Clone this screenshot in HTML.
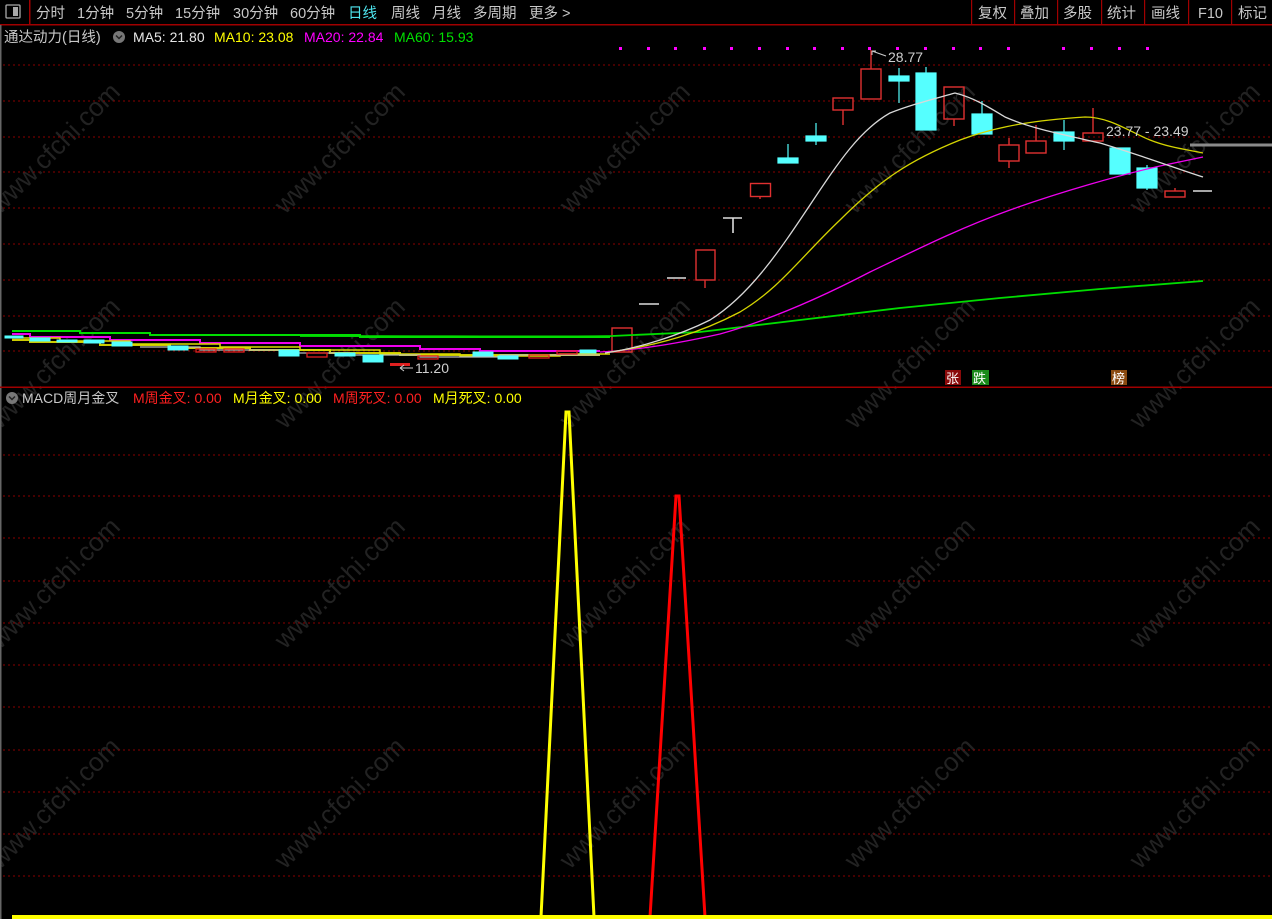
<!DOCTYPE html>
<html><head><meta charset="utf-8"><style>
html,body{margin:0;padding:0;background:#000;width:1272px;height:919px;overflow:hidden}
body{font-family:"Liberation Sans","Noto Sans CJK SC",sans-serif}
svg{position:absolute;left:0;top:0}
</style></head><body>
<svg width="1272" height="919" viewBox="0 0 1272 919" xmlns="http://www.w3.org/2000/svg" font-family="Liberation Sans, Noto Sans CJK SC, sans-serif">
<g fill="#222" font-size="26" font-family="Liberation Sans, sans-serif">
<text transform="translate(0,215) rotate(-45)">www.cfchi.com</text>
<text transform="translate(285,215) rotate(-45)">www.cfchi.com</text>
<text transform="translate(570,215) rotate(-45)">www.cfchi.com</text>
<text transform="translate(855,215) rotate(-45)">www.cfchi.com</text>
<text transform="translate(1140,215) rotate(-45)">www.cfchi.com</text>
<text transform="translate(0,430) rotate(-45)">www.cfchi.com</text>
<text transform="translate(285,430) rotate(-45)">www.cfchi.com</text>
<text transform="translate(570,430) rotate(-45)">www.cfchi.com</text>
<text transform="translate(855,430) rotate(-45)">www.cfchi.com</text>
<text transform="translate(1140,430) rotate(-45)">www.cfchi.com</text>
<text transform="translate(0,650) rotate(-45)">www.cfchi.com</text>
<text transform="translate(285,650) rotate(-45)">www.cfchi.com</text>
<text transform="translate(570,650) rotate(-45)">www.cfchi.com</text>
<text transform="translate(855,650) rotate(-45)">www.cfchi.com</text>
<text transform="translate(1140,650) rotate(-45)">www.cfchi.com</text>
<text transform="translate(0,870) rotate(-45)">www.cfchi.com</text>
<text transform="translate(285,870) rotate(-45)">www.cfchi.com</text>
<text transform="translate(570,870) rotate(-45)">www.cfchi.com</text>
<text transform="translate(855,870) rotate(-45)">www.cfchi.com</text>
<text transform="translate(1140,870) rotate(-45)">www.cfchi.com</text>
</g>
<rect x="0" y="24" width="1272" height="1.5" fill="#a00000"/>
<rect x="29" y="0" width="1.5" height="24" fill="#a00000"/>
<rect x="6" y="5" width="14" height="13" fill="none" stroke="#aaa" stroke-width="1.3" rx="1"/>
<rect x="13" y="7" width="5" height="9" fill="#aaa"/>
<g fill="#c8c8c8" font-size="14.5">
<text x="36" y="18">分时</text><text x="77" y="18">1分钟</text><text x="126" y="18">5分钟</text>
<text x="175" y="18">15分钟</text><text x="233" y="18">30分钟</text><text x="290" y="18">60分钟</text>
<text x="348" y="18" fill="#4fe6f0">日线</text><text x="391" y="18">周线</text><text x="432" y="18">月线</text>
<text x="473" y="18">多周期</text><text x="529" y="18">更多</text>
<text x="562" y="18">&gt;</text>
<text x="978" y="18">复权</text><text x="1020" y="18">叠加</text><text x="1063" y="18">多股</text>
<text x="1107" y="18">统计</text><text x="1151" y="18">画线</text><text x="1198" y="18">F10</text><text x="1238" y="18">标记</text>
</g>
<g fill="#a00000">
<rect x="971" y="0" width="1.2" height="24"/><rect x="1014" y="0" width="1.2" height="24"/><rect x="1057" y="0" width="1.2" height="24"/>
<rect x="1101" y="0" width="1.2" height="24"/><rect x="1144" y="0" width="1.2" height="24"/><rect x="1188" y="0" width="1.2" height="24"/><rect x="1231" y="0" width="1.2" height="24"/>
</g>
<text x="4" y="42" fill="#c8c8c8" font-size="14.5">通达动力(日线)</text>
<circle cx="119" cy="37" r="6" fill="#777"/><path d="M116 35.5 L119 38.5 L122 35.5" stroke="#222" stroke-width="1.5" fill="none"/>
<g font-size="14"><text x="133" y="42" fill="#e6e6e6">MA5: 21.80</text><text x="214" y="42" fill="#ffff00">MA10: 23.08</text>
<text x="304" y="42" fill="#ff00ff">MA20: 22.84</text><text x="394" y="42" fill="#00e000">MA60: 15.93</text></g>
<g stroke="#8a0000" stroke-width="1" stroke-dasharray="2 3">
<line x1="3" y1="65" x2="1272" y2="65"/><line x1="3" y1="101" x2="1272" y2="101"/><line x1="3" y1="137" x2="1272" y2="137"/>
<line x1="3" y1="172" x2="1272" y2="172"/><line x1="3" y1="208" x2="1272" y2="208"/><line x1="3" y1="244" x2="1272" y2="244"/>
<line x1="3" y1="280" x2="1272" y2="280"/><line x1="3" y1="316" x2="1272" y2="316"/><line x1="3" y1="351" x2="1272" y2="351"/>
<line x1="3" y1="455" x2="1272" y2="455"/><line x1="3" y1="496" x2="1272" y2="496"/><line x1="3" y1="538" x2="1272" y2="538"/>
<line x1="3" y1="581" x2="1272" y2="581"/><line x1="3" y1="623" x2="1272" y2="623"/><line x1="3" y1="665" x2="1272" y2="665"/>
<line x1="3" y1="707" x2="1272" y2="707"/><line x1="3" y1="750" x2="1272" y2="750"/><line x1="3" y1="792" x2="1272" y2="792"/>
<line x1="3" y1="834" x2="1272" y2="834"/><line x1="3" y1="876" x2="1272" y2="876"/>
</g>
<rect x="0" y="25" width="1.5" height="894" fill="#666"/>
<rect x="0" y="386.5" width="1272" height="1.5" fill="#a00000"/>
<g fill="#ff00ff">
<rect x="619" y="47" width="3" height="3"/><rect x="647" y="47" width="3" height="3"/><rect x="674" y="47" width="3" height="3"/>
<rect x="703" y="47" width="3" height="3"/><rect x="730" y="47" width="3" height="3"/><rect x="758" y="47" width="3" height="3"/>
<rect x="786" y="47" width="3" height="3"/><rect x="813" y="47" width="3" height="3"/><rect x="841" y="47" width="3" height="3"/>
<rect x="868" y="47" width="3" height="3"/><rect x="896" y="47" width="3" height="3"/><rect x="924" y="47" width="3" height="3"/>
<rect x="952" y="47" width="3" height="3"/><rect x="979" y="47" width="3" height="3"/><rect x="1007" y="47" width="3" height="3"/>
<rect x="1062" y="47" width="3" height="3"/><rect x="1090" y="47" width="3" height="3"/><rect x="1118" y="47" width="3" height="3"/><rect x="1146" y="47" width="3" height="3"/>
</g>
<g stroke-width="2" fill="none">
<path d="M12 331 H80 V333 H150 V335 H360 V337 H610" stroke="#00dd00"/>
<path d="M12 334 H30 V337 H110 V340 H200 V343 H300 V346 H420 V349 H480 V351 H600" stroke="#ee00ee"/>
<path d="M12 340 H30 V342 H100 V345 H170 V348 H250 V350 H330 V353 H400 V355 H520 V355 H600" stroke="#cccc00"/>
<path d="M12 338 H60 V341 H130 V344 H220 V347 H300 V350 H380 V354 H460 V356 H560 V354 H610" stroke="#dddd00" stroke-width="1.5"/>
<path d="M140 347 H200 V350 H280 V353 H350 V355 H420 V357 H500 V355 H600" stroke="#bbb" stroke-width="1.3"/>
</g>
<g fill="#5ff" stroke="#5ff" stroke-width="1">
<rect x="5" y="336" width="18" height="2"/><rect x="30" y="338" width="20" height="3"/><rect x="57" y="340" width="20" height="2"/>
<rect x="84" y="340" width="20" height="3"/><rect x="112" y="342" width="20" height="4"/><rect x="168" y="346" width="20" height="4"/>
<rect x="279" y="350" width="20" height="6"/><rect x="335" y="353" width="20" height="3"/><rect x="363" y="355" width="20" height="7"/>
<rect x="473" y="352" width="20" height="4"/><rect x="498" y="356" width="20" height="3"/><rect x="580" y="350" width="16" height="3"/>
</g>
<g fill="none" stroke="#e02020" stroke-width="1.3">
<rect x="196" y="349" width="20" height="3"/><rect x="224" y="349" width="20" height="3"/><rect x="307" y="353" width="20" height="4"/>
<rect x="418" y="356" width="20" height="3"/><rect x="529" y="355" width="20" height="3"/><rect x="557" y="351" width="20" height="3"/>
</g>
<rect x="390" y="363" width="20" height="3" fill="#e02020"/>
<g fill="none" stroke="#e03030" stroke-width="1.4">
<rect x="612" y="328" width="20" height="24"/>
<rect x="696" y="250" width="19" height="30"/><line x1="705" y1="280" x2="705" y2="288"/>
<rect x="750.5" y="183.5" width="20" height="13"/><line x1="760" y1="197" x2="760" y2="199"/>
<rect x="833" y="98" width="20" height="12"/><line x1="843" y1="110" x2="843" y2="125"/>
<rect x="861" y="69" width="20" height="30"/><line x1="871" y1="50" x2="871" y2="69"/>
<rect x="944" y="87" width="20" height="32"/><line x1="954" y1="119" x2="954" y2="126"/>
<rect x="999" y="145" width="20" height="16"/><line x1="1009" y1="138" x2="1009" y2="145"/><line x1="1009" y1="161" x2="1009" y2="168"/>
<rect x="1026" y="141" width="20" height="12"/><line x1="1036" y1="125" x2="1036" y2="141"/>
<rect x="1083" y="133" width="20" height="8"/><line x1="1093" y1="108" x2="1093" y2="133"/>
<rect x="1165" y="191" width="20" height="6"/><line x1="1175" y1="188" x2="1175" y2="191"/>
</g>
<g stroke="#ddd" stroke-width="1.6">
<line x1="639" y1="304" x2="659" y2="304"/><line x1="667" y1="278" x2="686" y2="278"/>
<line x1="723" y1="218" x2="742" y2="218"/><line x1="733" y1="218" x2="733" y2="233"/>
<line x1="1193" y1="191" x2="1212" y2="191"/>
</g>
<g fill="#5ff" stroke="#5ff" stroke-width="1.2">
<rect x="778" y="158" width="20" height="5"/><line x1="788" y1="144" x2="788" y2="158"/>
<rect x="806" y="136" width="20" height="5"/><line x1="816" y1="123" x2="816" y2="145"/>
<rect x="889" y="76" width="20" height="5"/><line x1="899" y1="68" x2="899" y2="103"/>
<rect x="916" y="73" width="20" height="57"/><line x1="926" y1="67" x2="926" y2="73"/>
<rect x="972" y="114" width="20" height="20"/><line x1="982" y1="101" x2="982" y2="114"/>
<rect x="1054" y="132" width="20" height="9"/><line x1="1064" y1="120" x2="1064" y2="150"/>
<rect x="1110" y="148" width="20" height="26"/>
<rect x="1137" y="168" width="20" height="20"/><line x1="1147" y1="165" x2="1147" y2="190"/>
</g>
<g fill="none" stroke-width="1.3">
<path d="M300 336 C450 336 560 337 612 336 L700 332 L800 320 L900 308 L1000 298 L1100 289 L1203 281" stroke="#00dd00" stroke-width="1.8"/>
<path d="M600 352 C640 350 680 343 720 334 C770 320 820 298 870 272 C920 248 960 228 1010 210 C1060 192 1120 175 1160 166 L1203 157" stroke="#ee00ee"/>
<path d="M610 352 C660 345 700 333 740 312 C780 288 800 258 840 220 C880 180 910 160 960 140 C1000 125 1040 120 1085 117 C1110 117 1130 132 1150 140 C1170 148 1190 150 1203 153" stroke="#d4d400"/>
<path d="M605 353 C640 348 680 335 710 320 C750 295 780 250 810 205 C840 160 860 130 890 113 C910 105 930 100 955 93 C975 98 990 108 1005 117 C1030 128 1060 134 1100 143 C1140 155 1175 168 1203 177" stroke="#d8d8d8"/>
</g>
<rect x="1190" y="143.5" width="82" height="3" fill="#8a8a8a"/>
<g fill="#cfcfcf" font-size="14">
<text x="888" y="62">28.77</text><text x="1106" y="136">23.77 - 23.49</text><text x="415" y="373">11.20</text>
</g>
<path d="M872 51 L886 56 M872 51 L872 55 M872 51 L876 51" stroke="#ccc" stroke-width="1" fill="none"/>
<path d="M400 368 L413 368 M400 368 L404 365 M400 368 L404 371" stroke="#ccc" stroke-width="1" fill="none"/>
<rect x="945" y="370" width="16" height="15" fill="#8a0a0a"/><text x="946" y="383" fill="#fff" font-size="13">张</text>
<rect x="972" y="370" width="17" height="15" fill="#1a8a1a"/><text x="973" y="383" fill="#fff" font-size="13">跌</text>
<rect x="1111" y="370" width="16" height="15" fill="#8a4a10"/><text x="1112" y="383" fill="#fff" font-size="13">榜</text>
<circle cx="12" cy="398" r="6" fill="#777"/><path d="M9 396.5 L12 399.5 L15 396.5" stroke="#222" stroke-width="1.5" fill="none"/>
<g font-size="14">
<text x="22" y="403" fill="#c8c8c8">MACD周月金叉</text>
<text x="133" y="403" fill="#ff2020">M周金叉: 0.00</text>
<text x="233" y="403" fill="#ffff00">M月金叉: 0.00</text>
<text x="333" y="403" fill="#ff2020">M周死叉: 0.00</text>
<text x="433" y="403" fill="#ffff00">M月死叉: 0.00</text>
</g>
<path d="M541 917 L566 412 L569 412 L594 917" fill="none" stroke="#ffff00" stroke-width="3"/>
<path d="M650 917 L676 496 L679 496 L705 917" fill="none" stroke="#ff0000" stroke-width="3"/>
<rect x="12" y="915" width="1260" height="4" fill="#ffff00"/>
</svg>
</body></html>
